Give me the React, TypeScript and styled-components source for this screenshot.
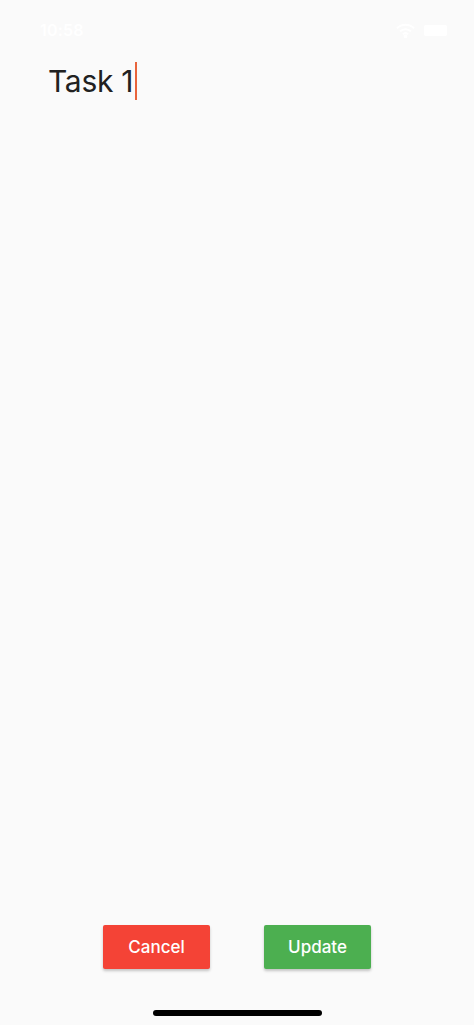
import React from 'react';
import styled, { createGlobalStyle } from 'styled-components';

const Global = createGlobalStyle`
  html, body {
    margin: 0;
    padding: 0;
    background: #fafafa;
  }
  * {
    box-sizing: border-box;
  }
`;

const Screen = styled.div`
  width: 474px;
  height: 1025px;
  overflow: hidden;
  display: flex;
  flex-direction: column;
  background: #fafafa;
  font-family: Inter, 'Liberation Sans', sans-serif;
`;

const StatusBar = styled.div`
  display: flex;
  align-items: center;
  justify-content: space-between;
  height: 20px;
  margin-top: 20px;
  padding: 0 27px 0 40px;
`;

const Time = styled.span`
  color: #ffffff;
  font-size: 16px;
  font-weight: 600;
  letter-spacing: 0.2px;
`;

const StatusIcons = styled.div`
  display: flex;
  align-items: center;
  gap: 9px;
`;

const Battery = styled.div`
  width: 23px;
  height: 11px;
  border-radius: 2px;
  background: #ffffff;
`;

const Field = styled.div`
  display: flex;
  align-items: center;
  height: 40px;
  margin-top: 21px;
  padding-left: 48px;
`;

const FieldText = styled.span`
  width: 87px;
  color: #212121;
  font-size: 30px;
  line-height: 40px;
  font-weight: 400;
  letter-spacing: -0.3px;
`;

const Caret = styled.span`
  flex-shrink: 0;
  width: 2px;
  height: 38px;
  background: #e8643c;
`;

const Spacer = styled.div`
  flex: 1;
`;

const Actions = styled.div`
  display: flex;
  justify-content: center;
  gap: 54px;
`;

const ActionButton = styled.button<{ $color: string }>`
  width: 107px;
  height: 44px;
  padding: 0;
  border: none;
  border-radius: 2px;
  background: ${(props) => props.$color};
  color: #ffffff;
  font-family: inherit;
  font-size: 17px;
  font-weight: 500;
  box-shadow: 0 2px 3px rgba(0, 0, 0, 0.22);
`;

const HomeBar = styled.div`
  display: flex;
  justify-content: center;
  padding: 41px 0 9px;
`;

const HomeIndicator = styled.div`
  width: 169px;
  height: 6px;
  border-radius: 3px;
  background: #000000;
`;

const WifiIcon = () => (
  <svg width="19" height="15" viewBox="0 0 19 15" fill="none" stroke="#ffffff" strokeWidth="2">
    <path d="M1 5.2a12 12 0 0 1 17 0" />
    <path d="M4 8.4a7.8 7.8 0 0 1 11 0" />
    <path d="M6.9 11.2a3.8 3.8 0 0 1 5.2 0" />
    <circle cx="9.5" cy="13.2" r="0.9" fill="#ffffff" />
  </svg>
);

export default function App() {
  return (
    <Screen>
      <Global />
      <StatusBar>
        <Time>10:58</Time>
        <StatusIcons>
          <WifiIcon />
          <Battery />
        </StatusIcons>
      </StatusBar>
      <Field>
        <FieldText>Task 1</FieldText>
        <Caret />
      </Field>
      <Spacer />
      <Actions>
        <ActionButton $color="#f44336">Cancel</ActionButton>
        <ActionButton $color="#4caf50">Update</ActionButton>
      </Actions>
      <HomeBar>
        <HomeIndicator />
      </HomeBar>
    </Screen>
  );
}
